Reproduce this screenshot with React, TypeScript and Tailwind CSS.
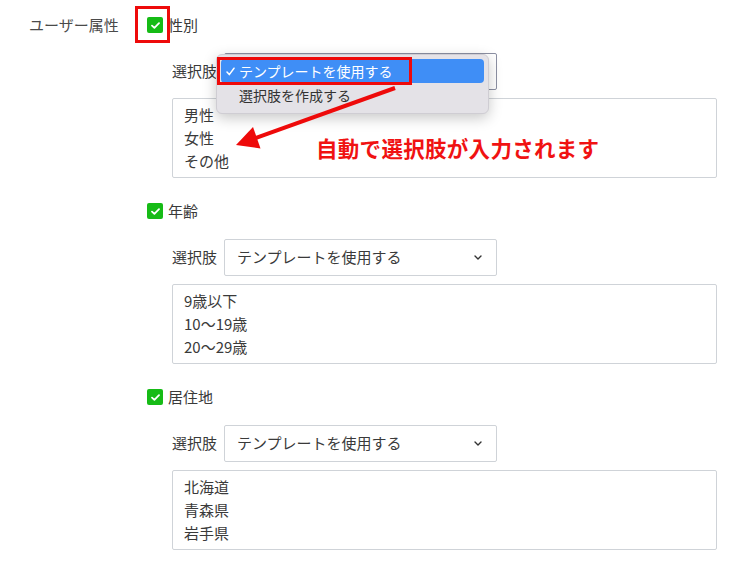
import React from 'react';

const ChoiceBox = ({ lines }: { lines: string[] }) => (
  <div className="mt-[8px] ml-[25px] w-[545px] h-[80px] overflow-hidden border border-[#cfd3d8] rounded-[2px] bg-white pl-[11px] pt-[4px] text-[15px] leading-[23px] text-[#3a3a3a]">
    {lines.map((l) => (
      <div key={l}>{l}</div>
    ))}
  </div>
);

const CheckBox = () => (
  <span className="flex items-center justify-center w-[16px] h-[16px] rounded-[2px] bg-[#16bb16]">
    <svg width="9" height="7" viewBox="0 0 9 7" fill="none">
      <path d="M1 3.6 L3.4 5.8 L8 1.2" stroke="white" strokeWidth="1.8" strokeLinecap="round" strokeLinejoin="round" />
    </svg>
  </span>
);

const Section = ({ title, lines, focused }: { title: string; lines: string[]; focused?: boolean }) => (
  <div className="pb-[22px]">
    <div className="flex items-center h-[22px] gap-[5px] text-[15px] text-[#3a3a3a]">
      <CheckBox />
      <span>{title}</span>
    </div>
    <div className="mt-[17px] ml-[25px] flex items-center">
      <span className="w-[52px] text-[15px] text-[#3a3a3a]">選択肢</span>
      <div
        className={`flex items-center justify-between w-[273px] h-[37px] bg-white rounded-[2px] pl-3 pr-[14px] text-[15px] text-[#3a3a3a] border ${
          focused ? 'border-[#8c90a3]' : 'border-[#cfd3d8]'
        }`}
      >
        <span>テンプレートを使用する</span>
        <svg width="8" height="5" viewBox="0 0 8 5" fill="none">
          <path d="M1 1 L4 4 L7 1" stroke="#333" strokeWidth="1.4" strokeLinecap="round" strokeLinejoin="round" />
        </svg>
      </div>
    </div>
    <ChoiceBox lines={lines} />
  </div>
);

export default function App() {
  return (
    <div className="relative w-[753px] h-[568px] overflow-hidden bg-white font-['Noto_Sans_CJK_JP','Noto_Sans',sans-serif]">
      <div className="flex pl-[29px] pt-[14px]">
        <div className="w-[118px] h-[22px] flex items-center text-[15px] text-[#4a4a4a]">ユーザー属性</div>
        <div className="flex flex-col">
          <Section title="性別" lines={['男性', '女性', 'その他']} focused />
          <Section title="年齢" lines={['9歳以下', '10〜19歳', '20〜29歳', '30〜39歳']} />
          <Section title="居住地" lines={['北海道', '青森県', '岩手県', '宮城県']} />
        </div>
      </div>

      {/* red frame around the first checkbox */}
      <div className="absolute left-[135px] top-[6px] w-[35px] h-[37px] border-[3px] border-[#ee0a0a]" />

      {/* native popup menu */}
      <div className="absolute left-[216px] top-[54px] w-[273px] h-[60px] rounded-[6px] bg-[#e4e2e7] shadow-[0_4px_14px_rgba(0,0,0,0.22)] border border-[#cfcdd3] px-[4px] pt-[4px] text-[14px]">
        <div className="flex items-center h-[24px] rounded-[4px] bg-[#3f8ef6] text-white pl-[5px]">
          <svg width="9" height="9" viewBox="0 0 9 9" fill="none" className="mr-[4px]">
            <path d="M1 5 L3.3 7.6 L8 1.2" stroke="white" strokeWidth="1.5" strokeLinecap="round" strokeLinejoin="round" />
          </svg>
          <span>テンプレートを使用する</span>
        </div>
        <div className="flex items-center h-[24px] pl-[18px] text-[#333]">選択肢を作成する</div>
      </div>

      {/* red frame around the highlighted item */}
      <div className="absolute left-[217px] top-[57px] w-[195px] h-[28px] border-[3px] border-[#ee0a0a]" />

      {/* arrow */}
      <svg className="absolute left-0 top-0" width="753" height="568" viewBox="0 0 753 568">
        <line x1="395" y1="88" x2="254" y2="138.5" stroke="#ee0a0a" strokeWidth="4" />
        <polygon points="236,145 253,127 260.5,148.5" fill="#ee0a0a" />
      </svg>

      <div className="absolute left-[316px] top-[136px] text-[21.5px] leading-[24px] font-bold text-[#f01212] tracking-[0.3px]">
        自動で選択肢が入力されます
      </div>
    </div>
  );
}
